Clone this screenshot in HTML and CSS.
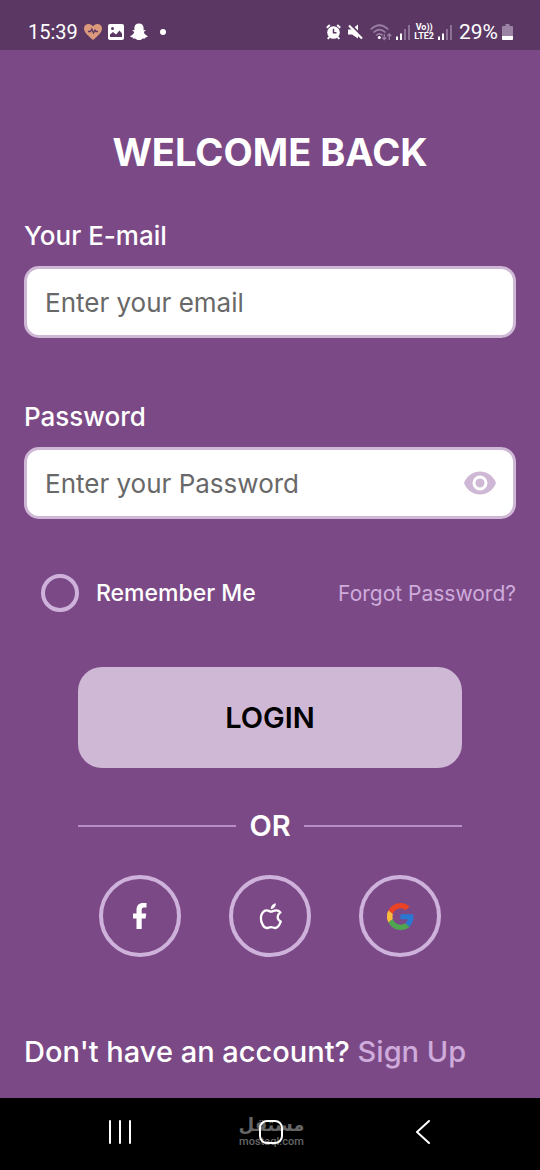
FILE: index.html
```html
<!DOCTYPE html>
<html lang="en">
<head>
<meta charset="utf-8">
<meta name="viewport" content="width=device-width, initial-scale=1">
<title>Welcome Back</title>
<link rel="stylesheet" href="styles.css">
</head>
<body>
<header class="status">
  <div class="status-group status-left">
    <span class="status-text">15:39</span>
    <svg width="18" height="18" viewBox="0 0 18 18" aria-hidden="true"><path d="M9 17C3 12 0 9 0 5.500C0 2.500 2.200 1 4.500 1C6.500 1 8.200 2 9 3.500C9.800 2 11.500 1 13.500 1C15.800 1 18 2.500 18 5.500C18 9 15 12 9 17Z" fill="#dc9a7c"/><path d="M4 8.500h2.500l1.300-2.500 1.700 4 1.500-3 1 1.500h2" fill="none" stroke="#5b3864" stroke-width="1.300"/></svg>
    <svg width="16" height="16" viewBox="0 0 16 16" aria-hidden="true"><rect width="16" height="16" rx="2" fill="#fff"/><circle cx="4.500" cy="4.500" r="1.500" fill="#5b3864"/><path d="M2 13V10.500L5 8l3 2.500L11.500 6.500 14 9.500V13Z" fill="#5b3864"/></svg>
    <svg width="18" height="18" viewBox="0 0 18 18" aria-hidden="true"><path d="M9 .5c3 0 4.600 2 4.600 4.700v2l1.700-.3c.5.600 0 1.200-1.500 1.800.3 2 1.700 3.600 3.900 4.200.2.800-.8 1.200-2.200 1.400l-.4 1.200c-1.200-.2-2.200-.2-3 .4-2 1.600-4.200 1.600-6.200 0-.8-.6-1.800-.6-3-.4l-.4-1.200C1.100 14.100.1 13.700.3 12.900c2.200-.6 3.600-2.200 3.900-4.200C2.700 8.100 2.200 7.500 2.700 6.900l1.700.3v-2C4.400 2.500 6 .5 9 .5Z" fill="#fff"/></svg>
    <span class="status-dot"></span>
  </div>
  <div class="status-group status-right">
    <svg class="spaced" width="15" height="16" viewBox="0 0 15 16" aria-hidden="true"><circle cx="7.500" cy="8.500" r="6.300" fill="#fff"/><path d="M.8 3.700 3.800 1M14.200 3.700 11.200 1M3.300 13 1.800 15M11.700 13l1.500 2" stroke="#fff" stroke-width="2"/><path d="M7.500 4.800v4H10.500" fill="none" stroke="#5b3864" stroke-width="1.500"/></svg>
    <svg class="spaced" width="15" height="16" viewBox="0 0 15 16" aria-hidden="true"><path d="M0 5.500h3.500L10 .5v14L4 10.500H0Z" fill="#fff"/><path d="M2.500.5 15 13" stroke="#5b3864" stroke-width="2"/><path d="M1 1.500 14 14.500" stroke="#fff" stroke-width="2.200"/></svg>
    <svg width="22" height="17" viewBox="0 0 22 17" aria-hidden="true"><g fill="none" stroke="#9b7fa3" stroke-width="1.700"><path d="M.7 5.500Q9.500-3 18.300 5.500M3.500 8.500Q9.500 2.700 15.500 8.500M6.300 11.300Q9.500 8.300 12.500 11.300"/><path d="M14.300 10v5.500m-2-2 2 2 2-2M19.300 16v-6m-2 2 2-2 2 2" stroke-width="1.300"/></g><circle cx="9.300" cy="13.500" r="1.500" fill="#fff"/></svg>
    <svg width="14" height="16" viewBox="0 0 14 16" aria-hidden="true"><path d="M0 12.500h2V16H0ZM4 9.500h2V16H4Z" fill="#fff"/><path d="M8 5h2v11H8ZM12 1h2v15h-2Z" fill="#8d7195"/></svg>
    <span class="network"><span>Vo))</span><span>LTE2</span></span>
    <svg class="spaced" width="14" height="16" viewBox="0 0 14 16" aria-hidden="true"><path d="M0 12.500h2V16H0ZM4 9.500h2V16H4Z" fill="#fff"/><path d="M8 5h2v11H8ZM12 1h2v15h-2Z" fill="#8d7195"/></svg>
    <span class="status-text battery-text">29%</span>
    <svg width="11" height="16" viewBox="0 0 11 16" aria-hidden="true"><path d="M3.500 0h4v2H10a1 1 0 0 1 1 1v12a1 1 0 0 1-1 1H1a1 1 0 0 1-1-1V3a1 1 0 0 1 1-1h2.500Z" fill="#9b83a3"/><path d="M0 12h11v3a1 1 0 0 1-1 1H1a1 1 0 0 1-1-1Z" fill="#fff"/></svg>
  </div>
</header>

<main class="login">
  <h1 class="title">WELCOME BACK</h1>
  <form class="form">
    <div class="field">
      <label class="label" for="email">Your E-mail</label>
      <input class="input" id="email" type="email" placeholder="Enter your email">
    </div>
    <div class="field">
      <label class="label" for="password">Password</label>
      <div class="password">
        <input class="input" id="password" type="password" placeholder="Enter your Password">
        <button class="reveal" type="button" aria-label="Show password">
          <svg width="32" height="24" viewBox="0 0 32 24" aria-hidden="true"><path d="M0 12C3 4.500 9 .5 16 .5S29 4.500 32 12C29 19.500 23 23.500 16 23.500S3 19.500 0 12Z" fill="#cfb8d6"/><circle cx="16" cy="12" r="6" fill="#cfb8d6" stroke="#fff" stroke-width="3"/></svg>
        </button>
      </div>
    </div>
    <div class="options">
      <label class="remember"><input class="check" type="checkbox">Remember Me</label>
      <a class="forgot" href="#">Forgot Password?</a>
    </div>
    <button class="submit" type="submit">LOGIN</button>
  </form>
  <div class="divider">OR</div>
  <div class="social">
    <button class="social-btn" type="button" aria-label="Facebook">
      <svg width="14" height="26" viewBox="0 0 14 26" aria-hidden="true"><path d="M3.500 26V15.500H0V10.500H3.500V7C3.500 2.500 6 0 10 0H13.500V4.600H11C9.300 4.600 8.700 5.500 8.700 7V10.500H13.200L12.600 15.500H8.700V26Z" fill="#fff"/></svg>
    </button>
    <button class="social-btn" type="button" aria-label="Apple">
      <svg width="23" height="27" viewBox="0 0 24 28" aria-hidden="true"><path d="M12.500 9C14 9 15.500 7.600 18 7.600 20 7.600 21.300 8.500 22.300 9.700 18.300 12.500 18.600 17.300 22.700 19.300 21.500 22.500 19.300 26 16.800 26 15.200 26 14.300 25 12.500 25S9.700 26 8.200 26C5 26 2 20.500 2 16 2 10.500 5 7.600 8 7.600 10 7.600 11.200 9 12.500 9Z" fill="none" stroke="#fff" stroke-width="2.400" stroke-linejoin="round"/><path d="M12.300 6.300C12.200 3 14.500 .6 17.500 .2 17.700 3.500 15.400 6 12.300 6.300Z" fill="#fff"/></svg>
    </button>
    <button class="social-btn" type="button" aria-label="Google">
      <svg width="27" height="27" viewBox="0 0 48 48" aria-hidden="true"><path d="M24 9.500c3.500 0 6.700 1.200 9.200 3.600l6.900-6.900C35.900 2.400 30.500 0 24 0 14.600 0 6.500 5.400 2.600 13.200l8 6.200C12.400 13.700 17.700 9.500 24 9.500Z" fill="#ea4326"/><path d="M47 24.600c0-1.600-.2-3.100-.4-4.600H24v9h12.900c-.6 3-2.300 5.500-4.800 7.200l7.700 6C44.400 38 47 31.800 47 24.600Z" fill="#2878d4"/><path d="M10.500 28.600a14.500 14.500 0 0 1 0-9.200l-8-6.200a24 24 0 0 0 0 21.600Z" fill="#fbbc3c"/><path d="M24 48c6.500 0 11.900-2.100 15.900-5.800l-7.700-6c-2.200 1.500-4.900 2.300-8.200 2.300-6.300 0-11.600-4.200-13.500-9.900l-8 6.200C6.500 42.600 14.600 48 24 48Z" fill="#50a550"/></svg>
    </button>
  </div>
  <p class="signup">Don't have an account? <a class="signup-link" href="#">Sign Up</a></p>
</main>

<nav class="nav" aria-label="System">
  <button class="nav-btn" type="button" aria-label="Recent apps"><svg width="24" height="24" viewBox="0 0 24 24" aria-hidden="true"><path d="M2 1v22M12 1v22M22 1v22" stroke="#fff" stroke-width="2" stroke-linecap="round"/></svg></button>
  <button class="nav-btn" type="button" aria-label="Home">
    <span class="watermark"><span class="mark-ar" lang="ar">مستقل</span><span class="mark-en">mostaql.com</span></span>
    <svg class="home" width="24" height="24" viewBox="0 0 24 24" aria-hidden="true"><rect x="1" y="1" width="22" height="22" rx="7" fill="none" stroke="#fff" stroke-width="2"/></svg></button>
  <button class="nav-btn" type="button" aria-label="Back"><svg width="24" height="24" viewBox="0 0 24 24" aria-hidden="true"><path d="M18 1 6 12l12 11" fill="none" stroke="#fff" stroke-width="2" stroke-linecap="round" stroke-linejoin="round"/></svg></button>
</nav>
</body>
</html>
```
FILE: styles.css
```css
* {
  box-sizing: border-box;
}

body {
  margin: 0;
  min-height: 100vh;
  display: flex;
  flex-direction: column;
  background: #7b4a86;
  color: #fff;
  font-family: Inter, "Liberation Sans", sans-serif;
}

button {
  border: 0;
  padding: 0;
  background: none;
  color: inherit;
  font-family: inherit;
  cursor: pointer;
}

svg {
  display: block;
  flex: none;
}

a {
  color: #cfabdc;
  text-decoration: none;
}

.status {
  display: flex;
  justify-content: space-between;
  padding: 14px 27px 0 28px;
  height: 50px;
  background: #5b3864;
}

.status-group {
  display: flex;
  align-items: center;
}

.status-left {
  gap: 6px;
}

.status-right {
  gap: 4px;
}

.spaced {
  margin-right: 3px;
}

.status-text {
  font-family: Roboto, sans-serif;
  font-size: 20px;
  line-height: 24px;
}

.battery-text {
  font-size: 21px;
}

.status-dot {
  width: 6px;
  height: 6px;
  margin-left: 6px;
  border-radius: 50%;
  background: #fff;
}

.network {
  display: flex;
  flex-direction: column;
  align-items: center;
  font: 700 9px/9px Roboto, sans-serif;
}

.login {
  flex: 1;
  display: flex;
  flex-direction: column;
  padding: 79px 24px 28px;
}

.title {
  margin: 0 0 46px;
  text-align: center;
  font-size: 38px;
  line-height: 46px;
  font-weight: 700;
}

.form {
  display: flex;
  flex-direction: column;
}

.field {
  display: flex;
  flex-direction: column;
  gap: 15px;
}

.field + .field {
  margin-top: 64px;
}

.label {
  font-size: 26px;
  line-height: 30px;
  font-weight: 500;
}

.input {
  width: 100%;
  height: 72px;
  padding: 0 18px;
  border: 3px solid #cfb8d6;
  border-radius: 15px;
  background: #fff;
  color: #222;
  font-family: inherit;
  font-size: 26px;
}

.input::placeholder {
  color: #686868;
  opacity: 1;
}

.password {
  position: relative;
}

.password .input {
  padding-right: 64px;
}

.reveal {
  position: absolute;
  top: 24px;
  right: 20px;
}

.options {
  display: flex;
  align-items: center;
  justify-content: space-between;
  margin: 55px 0;
}

.remember {
  display: flex;
  align-items: center;
  gap: 17px;
  padding-left: 17px;
  font-size: 23px;
  font-weight: 500;
}

.check {
  appearance: none;
  width: 38px;
  height: 38px;
  margin: 0;
  border: 4px solid #cfb2dc;
  border-radius: 50%;
}

.check:checked {
  background: #cfb2dc;
}

.forgot {
  font-size: 21px;
}

.submit {
  height: 101px;
  margin: 0 54px;
  border-radius: 24px;
  background: #cfb8d6;
  color: #000;
  font-size: 29px;
  font-weight: 600;
}

.divider {
  display: flex;
  align-items: center;
  gap: 13px;
  margin: 40px 54px 31px;
  font-size: 29px;
  line-height: 36px;
  font-weight: 600;
}

.divider::before,
.divider::after {
  content: "";
  flex: 1;
  height: 2px;
  background: #b78dc4;
}

.social {
  display: flex;
  justify-content: center;
  gap: 48px;
}

.social-btn {
  display: grid;
  place-items: center;
  width: 82px;
  height: 82px;
  border: 4px solid #cfb2dc;
  border-radius: 50%;
}

.signup {
  margin: auto 0 0;
  font-size: 29px;
  line-height: 36px;
  font-weight: 500;
}

.nav {
  display: flex;
  justify-content: space-around;
  align-items: center;
  height: 72px;
  padding: 0 41px 4px 44px;
  background: #000;
}

.nav-btn {
  position: relative;
  display: grid;
  place-items: center;
  width: 68px;
  height: 40px;
}

.home {
  position: relative;
}

.watermark {
  position: absolute;
  inset: 0;
  display: flex;
  flex-direction: column;
  align-items: center;
  padding-top: 2px;
  color: #666;
}

.mark-ar {
  font: 700 18px/22px "DejaVu Sans", sans-serif;
}

.mark-en {
  font: 500 11px/12px Roboto, sans-serif;
}
```
